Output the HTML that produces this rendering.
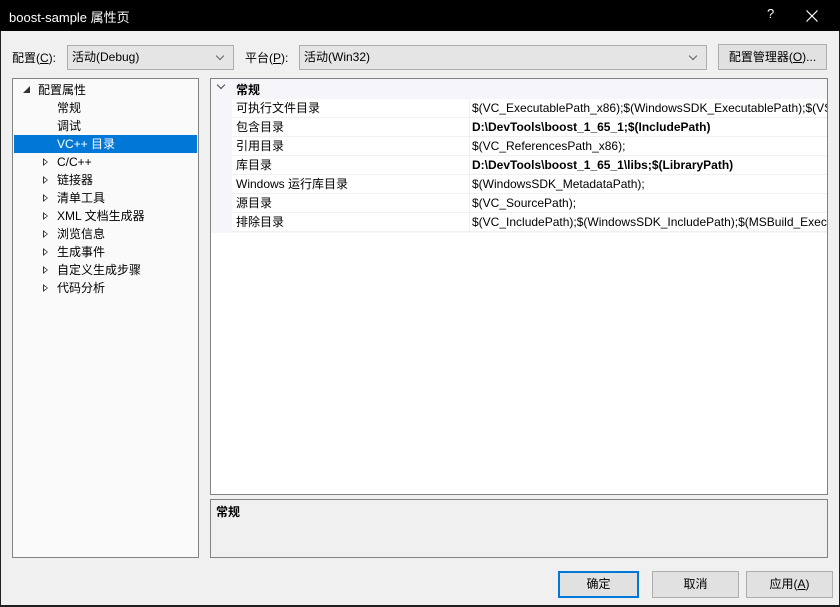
<!DOCTYPE html>
<html><head><meta charset="utf-8"><style>
*{margin:0;padding:0;box-sizing:border-box}
body{width:840px;height:607px;background:#1f1f1f;font-family:"Segoe UI","Liberation Sans","Noto Sans CJK SC",sans-serif;font-size:12px;color:#000;position:relative;overflow:hidden}
.a{position:absolute}
#title{left:0;top:0;width:840px;height:31px;background:#000;color:#fff;font-size:13px}
#body{left:1px;top:31px;width:838px;height:574px;background:#f0f0f0}
.combo{background:#e5e5e5;border:1px solid #adadad;height:25px;line-height:23px;padding-left:4px}
.chev{position:absolute;right:10px;top:7px;width:6px;height:6px;border-right:1px solid #606060;border-bottom:1px solid #606060;transform:rotate(45deg)}
.btn{background:#e1e1e1;border:1px solid #adadad;text-align:center;line-height:24px}
.panel{border:1px solid #828282;background:#fff}
.tree div{position:absolute;height:18px;line-height:18px;white-space:nowrap}
.tri{position:absolute;left:30px;width:0;height:0;border-left:5px solid #333;border-top:4px solid transparent;border-bottom:4px solid transparent;top:5px}
.tri:after{content:"";position:absolute;left:-4px;top:-2px;border-left:3px solid #fff;border-top:2px solid transparent;border-bottom:2px solid transparent}
.row{position:absolute;left:21px;width:595px;height:19px;line-height:18px;border-bottom:1px solid #f0f0f0;background:#fff;white-space:nowrap;overflow:hidden}
.row span{position:absolute;left:4px}
.row i{position:absolute;left:237px;top:0;height:19px;border-left:1px solid #f0f0f0;font-style:normal;padding-left:2px}
u{text-decoration:underline}
</style></head><body>
<div id="title" class="a"><span class="a" style="left:9px;top:7px">boost-sample 属性页</span><span class="a" style="left:767px;top:6px">?</span>
<svg class="a" style="left:806px;top:10px" width="12" height="12"><path d="M0.5 0.5L11.5 11.5M11.5 0.5L0.5 11.5" stroke="#fff" stroke-width="1.2"/></svg></div>
<div id="body" class="a"></div>
<span class="a" style="left:12px;top:49px">配置(<u>C</u>):</span>
<div class="a combo" style="left:67px;top:45px;width:167px">活动(Debug)<span class="chev"></span></div>
<span class="a" style="left:245px;top:49px">平台(<u>P</u>):</span>
<div class="a combo" style="left:299px;top:45px;width:408px">活动(Win32)<span class="chev"></span></div>
<div class="a btn" style="left:718px;top:44px;width:109px;height:26px">配置管理器(<u>O</u>)...</div>

<div class="a panel tree" style="left:12px;top:78px;width:187px;height:480px;background:#fafafa">
<svg class="a" style="left:10px;top:7px" width="8" height="8"><path d="M7 0L7 7L0 7Z" fill="#333"/></svg>
<div style="left:25px;top:2px">配置属性</div>
<div style="left:44px;top:20px">常规</div>
<div style="left:44px;top:38px">调试</div>
<div style="left:1px;top:56px;width:183px;background:#0078d7;color:#fff;padding-left:43px">VC++ 目录</div>
<div style="left:44px;top:74px">C/C++</div><span class="tri" style="top:79px"></span>
<div style="left:44px;top:92px">链接器</div><span class="tri" style="top:97px"></span>
<div style="left:44px;top:110px">清单工具</div><span class="tri" style="top:115px"></span>
<div style="left:44px;top:128px">XML 文档生成器</div><span class="tri" style="top:133px"></span>
<div style="left:44px;top:146px">浏览信息</div><span class="tri" style="top:151px"></span>
<div style="left:44px;top:164px">生成事件</div><span class="tri" style="top:169px"></span>
<div style="left:44px;top:182px">自定义生成步骤</div><span class="tri" style="top:187px"></span>
<div style="left:44px;top:200px">代码分析</div><span class="tri" style="top:205px"></span>
</div>

<div class="a panel" style="left:210px;top:78px;width:618px;height:417px;overflow:hidden">
<div class="a" style="left:0;top:0;width:616px;height:154px;background:#f5f5fa"></div>
<span class="a" style="left:7px;top:3px;width:6px;height:6px;border-right:1.5px solid #444;border-bottom:1.5px solid #444;transform:rotate(45deg)"></span>
<b class="a" style="left:25px;top:2px">常规</b>
<div class="row" style="top:20px"><span>可执行文件目录</span><i>$(VC_ExecutablePath_x86);$(WindowsSDK_ExecutablePath);$(VS_ExecutablePath)</i></div>
<div class="row" style="top:39px"><span>包含目录</span><i style="font-weight:bold">D:\DevTools\boost_1_65_1;$(IncludePath)</i></div>
<div class="row" style="top:58px"><span>引用目录</span><i>$(VC_ReferencesPath_x86);</i></div>
<div class="row" style="top:77px"><span>库目录</span><i style="font-weight:bold">D:\DevTools\boost_1_65_1\libs;$(LibraryPath)</i></div>
<div class="row" style="top:96px"><span>Windows 运行库目录</span><i>$(WindowsSDK_MetadataPath);</i></div>
<div class="row" style="top:115px"><span>源目录</span><i>$(VC_SourcePath);</i></div>
<div class="row" style="top:134px"><span>排除目录</span><i>$(VC_IncludePath);$(WindowsSDK_IncludePath);$(MSBuild_ExecutablePath)</i></div>
</div>

<div class="a panel" style="left:210px;top:499px;width:618px;height:59px;background:#f0f0f0"><b class="a" style="left:5px;top:3px">常规</b></div>

<div class="a btn" style="left:558px;top:571px;width:81px;height:27px;border:2px solid #0078d7;line-height:23px">确定</div>
<div class="a btn" style="left:652px;top:571px;width:87px;height:27px">取消</div>
<div class="a btn" style="left:746px;top:571px;width:87px;height:27px">应用(<u>A</u>)</div>
</body></html>
